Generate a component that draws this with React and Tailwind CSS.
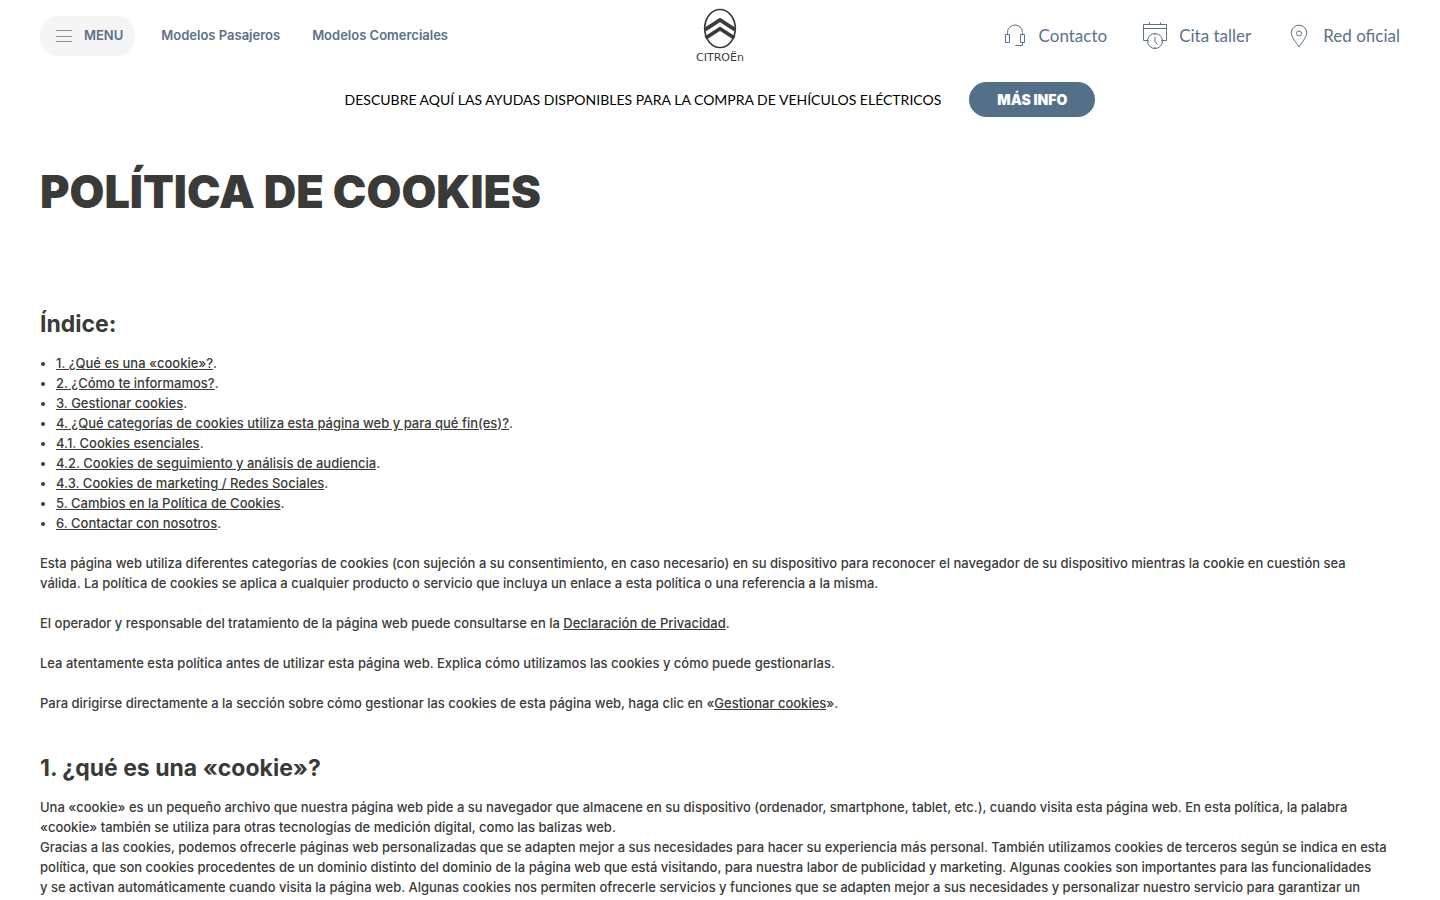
const indexLinks = [
  { id: 'que-es', label: '1. ¿Qué es una «cookie»?' },
  { id: 'informamos', label: '2. ¿Cómo te informamos?' },
  { id: 'gestionar', label: '3. Gestionar cookies' },
  { id: 'categorias', label: '4. ¿Qué categorías de cookies utiliza esta página web y para qué fin(es)?' },
  { id: 'esenciales', label: '4.1. Cookies esenciales' },
  { id: 'audiencia', label: '4.2. Cookies de seguimiento y análisis de audiencia' },
  { id: 'marketing', label: '4.3. Cookies de marketing / Redes Sociales' },
  { id: 'cambios', label: '5. Cambios en la Política de Cookies' },
  { id: 'contactar', label: '6. Contactar con nosotros' },
];

function Logo() {
  return (
    <a href="#inicio" aria-label="Citroën" className="flex flex-col items-center text-[#3a3a39]">
      <svg width="34" height="41" viewBox="0 0 34 41" fill="none" stroke="currentColor">
        <ellipse cx="17" cy="20.5" rx="15.3" ry="19" strokeWidth="1.7" />
        <path d="M2 21.6 17 12l15 9.6M2.6 30 17 20.8l14.4 9.2" strokeWidth="3.7" />
      </svg>
      <svg width="60" height="15" viewBox="0 0 60 15" fill="currentColor">
        <text x="30" y="12" textAnchor="middle" fontSize="11" fontFamily="DejaVu Sans, sans-serif">CITROËn</text>
      </svg>
    </a>
  );
}

function HeadsetIcon() {
  return (
    <svg width="24" height="24" viewBox="0 0 24 24" fill="none" stroke="currentColor">
      <path d="M4.5 10.5V8.500a7.5 7.5 0 0 1 15 0v2M2.5 10.5h4v8h-4zM17.5 10.5h4v8h-4zM19.5 18.5v3h-7" />
    </svg>
  );
}

function AppointmentIcon() {
  return (
    <svg width="24" height="28" viewBox="0 0 24 28" fill="none" stroke="currentColor">
      <path d="M4 18.5H.5v-16h23v16H20M.5 6.5h23M6.5 .5v2M17.5 .5v2" />
      <circle cx="12" cy="19" r="7.5" />
      <path d="M12 15v4.500l2.500 3M12 11.500V13M4.500 19H6M18 19h1.500M12 25v1.500" />
    </svg>
  );
}

function PinIcon() {
  return (
    <svg width="24" height="24" viewBox="0 0 24 24" fill="none" stroke="currentColor">
      <path d="M12 23C9 18 4.300 13.200 4.300 8.900a7.700 7.700 0 0 1 15.400 0C19.700 13.200 15 18 12 23z" />
      <circle cx="12" cy="9.500" r="2.500" />
    </svg>
  );
}

export default function App() {
  return (
    <div className="h-screen overflow-y-auto [scrollbar-width:none] bg-white font-['Inter',sans-serif] text-[#3a3a39]">
      <header className="grid grid-cols-[1fr_auto_1fr] items-center h-18 px-10 text-[#5a7189]">
        <nav className="flex items-center text-[13px] font-semibold">
          <button className="flex items-center gap-3 h-10 pl-4 pr-3 mr-[26px] rounded-[18px] bg-[#f5f5f6]">
            <svg width="16" height="14" viewBox="0 0 16 14" stroke="currentColor" strokeOpacity="0.75">
              <path d="M0 1.5h16M0 7.5h16M0 12.5h16" />
            </svg>
            MENU
          </button>
          <a href="#pasajeros" className="mr-8">Modelos Pasajeros</a>
          <a href="#comerciales">Modelos Comerciales</a>
        </nav>
        <Logo />
        <nav className="flex items-center justify-end gap-9 font-['Lato',sans-serif] text-[17px] leading-6">
          <a href="#contacto" className="flex items-center gap-3"><HeadsetIcon />Contacto</a>
          <a href="#cita" className="flex items-center gap-3"><AppointmentIcon />Cita taller</a>
          <a href="#red" className="flex items-center gap-3"><PinIcon />Red oficial</a>
        </nav>
      </header>

      {/* Promo strip */}
      <div className="flex items-center justify-center gap-7 pt-2.5 text-black">
        <p className="font-['Lato',sans-serif] text-sm">DESCUBRE AQUÍ LAS AYUDAS DISPONIBLES PARA LA COMPRA DE VEHÍCULOS ELÉCTRICOS</p>
        <a href="#ayudas" className="flex items-center justify-center h-[35px] px-7 rounded-full bg-[#547089] text-white text-sm font-black">
          MÁS INFO
        </a>
      </div>

      <main className="pl-10 pr-13 text-[13px] leading-5 font-medium">
        <h1 className="pt-[51px] text-[45px] font-black leading-12">POLÍTICA DE COOKIES</h1>

        <section className="pt-23">
          <h2 className="text-[23px] leading-8 font-bold">Índice:</h2>
          <ul className="list-disc pl-4 pt-[13px]">
            {indexLinks.map(l => (
              <li key={l.id}><a href={`#${l.id}`} className="underline">{l.label}</a>.</li>
            ))}
          </ul>
        </section>

        <div className="space-y-5 pt-5">
          <p>
            Esta página web utiliza diferentes categorías de cookies (con sujeción a su consentimiento, en caso necesario) en su dispositivo para reconocer el navegador de su dispositivo mientras la cookie en cuestión sea válida. La política de cookies se aplica a cualquier producto o servicio que incluya un enlace a esta política o una referencia a la misma.
          </p>
          <p>
            El operador y responsable del tratamiento de la página web puede consultarse en la <a href="#privacidad" className="underline">Declaración de Privacidad</a>.
          </p>
          <p>Lea atentamente esta política antes de utilizar esta página web. Explica cómo utilizamos las cookies y cómo puede gestionarlas.</p>
          <p>
            Para dirigirse directamente a la sección sobre cómo gestionar las cookies de esta página web, haga clic en «<a href="#gestionar" className="underline">Gestionar cookies</a>».
          </p>
        </div>

        <section id="que-es" className="pt-[39px]">
          <h2 className="text-[23px] leading-8 font-bold">1. ¿qué es una «cookie»?</h2>
          <p className="pt-[13px]">
            Una «cookie» es un pequeño archivo que nuestra página web pide a su navegador que almacene en su dispositivo (ordenador, smartphone, tablet, etc.), cuando visita esta página web. En esta política, la palabra «cookie» también se utiliza para otras tecnologías de medición digital, como las balizas web.
          </p>
          <p>
            Gracias a las cookies, podemos ofrecerle páginas web personalizadas que se adapten mejor a sus necesidades para hacer su experiencia más personal. También utilizamos cookies de terceros según se indica en esta política, que son cookies procedentes de un dominio distinto del dominio de la página web que está visitando, para nuestra labor de publicidad y marketing. Algunas cookies son importantes para las funcionalidades y&nbsp;se activan automáticamente cuando visita la página web. Algunas cookies nos permiten ofrecerle servicios y funciones que se adapten mejor a sus necesidades y personalizar nuestro servicio para garantizar un
          </p>
        </section>
      </main>
    </div>
  );
}
